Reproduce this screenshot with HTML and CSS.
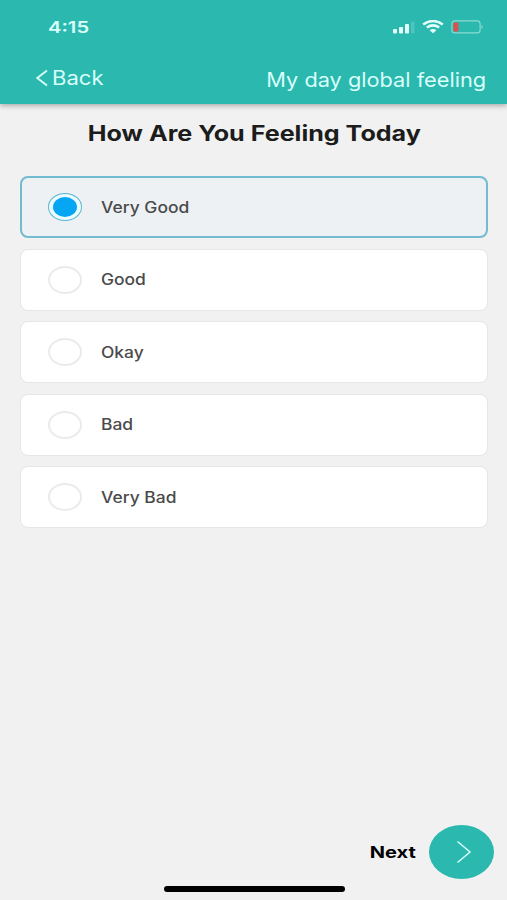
FILE: index.html
```html
<!DOCTYPE html>
<html lang="en">
<head>
  <meta charset="UTF-8">
  <meta name="viewport" content="width=device-width, initial-scale=1.0">
  <title>My day global feeling</title>
  <link rel="stylesheet" href="styles.css">
</head>
<body>
  <header class="header">
    <div class="status-bar">
      <span class="time">4:15</span>
      <div class="status-icons">
        <svg class="signal" width="22" height="14" viewBox="0 0 22 14">
          <rect x="0" y="9" width="4" height="4.5" rx="1"/>
          <rect x="6" y="7" width="4" height="6.5" rx="1"/>
          <rect x="12" y="4" width="4" height="9.5" rx="1"/>
          <rect x="18" y="1.5" width="3.5" height="12" rx="1" opacity="0.2"/>
        </svg>
        <svg class="wifi" width="22" height="14" viewBox="0 0 22 14">
          <path d="M1.2 4.6Q11-2.6 20.8 4.6"/>
          <path d="M4.8 7.6Q11 3.2 17.2 7.6"/>
          <path class="dot" d="M7.6 10.2Q11 7.6 14.4 10.2L11 13.2Z"/>
        </svg>
        <svg class="battery" width="33" height="14" viewBox="0 0 33 14">
          <rect class="case" x="0.9" y="0.9" width="28.2" height="12" rx="3"/>
          <rect class="level" x="2.4" y="2.4" width="5" height="9" rx="1.2"/>
          <path class="cap" d="M30.5 4.8Q33 6.9 30.5 9Z"/>
        </svg>
      </div>
    </div>
    <nav class="nav-bar">
      <a class="back">
        <svg width="12" height="18" viewBox="0 0 12 18"><path d="M11 1.5L1.3 9L11 16.5"/></svg>
        <span>Back</span>
      </a>
      <span class="page-title">My day global feeling</span>
    </nav>
  </header>

  <main class="content">
    <h1 class="question">How Are You Feeling Today</h1>
    <ul class="options">
      <li class="option selected"><span class="radio"></span><span class="label">Very Good</span></li>
      <li class="option"><span class="radio"></span><span class="label">Good</span></li>
      <li class="option"><span class="radio"></span><span class="label">Okay</span></li>
      <li class="option"><span class="radio"></span><span class="label">Bad</span></li>
      <li class="option"><span class="radio"></span><span class="label">Very Bad</span></li>
    </ul>
  </main>

  <footer class="footer">
    <span class="next-text">Next</span>
    <button class="next-button" aria-label="Next">
      <svg width="16" height="24" viewBox="0 0 16 24"><path d="M1.5 1.5L14 12L1.5 22.5"/></svg>
    </button>
  </footer>
  <div class="home-indicator"></div>
</body>
</html>
```
FILE: styles.css
```css
* {
  margin: 0;
  padding: 0;
  box-sizing: border-box;
}
body {
  display: flex;
  flex-direction: column;
  height: 900px;
  background: #f1f1f1;
  font-family: Inter, "Liberation Sans", sans-serif;
  overflow: hidden;
}
svg {
  display: block;
  fill: none;
}
.header {
  height: 104px;
  background: #2ab8af;
  color: #d9fffa;
  box-shadow: 0 2px 5px rgba(0, 0, 0, 0.28);
}
.status-bar {
  display: flex;
  justify-content: space-between;
  height: 54px;
  padding: 17px 23px 0 48px;
}
.time {
  font-size: 16px;
  font-weight: 600;
  line-height: 20px;
  transform: scaleX(1.26);
  transform-origin: left;
}
.status-icons {
  display: flex;
  gap: 7.5px;
  padding-top: 3px;
}
.signal {
  margin-right: -1px;
  fill: #e2fffb;
}
.wifi {
  stroke: #e2fffb;
  stroke-width: 2.5;
}
.wifi .dot {
  fill: #e2fffb;
  stroke: none;
}
.case {
  stroke: #8bdcd4;
  stroke-width: 1.1;
}
.level {
  fill: #d9534a;
}
.cap {
  fill: #8bdcd4;
}
.nav-bar {
  display: flex;
  justify-content: space-between;
  padding: 12px 21px 0 36px;
  line-height: 24px;
}
.back {
  display: flex;
  align-items: center;
  gap: 4px;
  height: 24px;
  font-size: 19.5px;
}
.back svg {
  stroke: #d9fffa;
  stroke-width: 1.8;
}
.back span {
  transform: scaleX(1.13);
  transform-origin: left;
}
.page-title {
  padding-top: 2px;
  font-size: 19.5px;
  transform: scaleX(1.115);
  transform-origin: right;
}
.content {
  flex: 1;
  padding: 17px 19px 0 20px;
}
.question {
  width: fit-content;
  margin: 0 auto;
  color: #1c1c1c;
  font-size: 21px;
  font-weight: 700;
  line-height: 26px;
  transform: scaleX(1.195);
}
.options {
  display: flex;
  flex-direction: column;
  gap: 10.5px;
  margin-top: 29px;
  list-style: none;
}
.option {
  display: flex;
  align-items: center;
  gap: 18.5px;
  height: 62px;
  padding-left: 27px;
  border: 1px solid #e6e6e6;
  border-radius: 8px;
  background: #fff;
}
.option.selected {
  border: 2px solid #72bbd0;
  padding-left: 26px;
  background: #edf1f4;
}
.radio {
  display: flex;
  align-items: center;
  justify-content: center;
  width: 34px;
  height: 28px;
  border: 2px solid #ebebeb;
  border-radius: 50%;
}
.selected .radio {
  border: 1.5px solid #5fb4d0;
  background: #e9fcff;
}
.selected .radio::after {
  content: "";
  width: 24px;
  height: 20px;
  border-radius: 50%;
  background: #06a6f4;
}
.label {
  color: #4a4a4a;
  font-size: 15.5px;
  font-weight: 500;
  transform: scaleX(1.125);
  transform-origin: left;
}
.footer {
  display: flex;
  align-items: center;
  justify-content: flex-end;
  gap: 13px;
  padding-right: 13px;
}
.next-text {
  color: #000;
  font-size: 16px;
  font-weight: 700;
  transform: scaleX(1.25);
  transform-origin: right;
}
.next-button {
  display: flex;
  align-items: center;
  justify-content: center;
  width: 65px;
  height: 54px;
  padding-left: 4px;
  border: none;
  border-radius: 50%;
  background: #2ab8af;
}
.next-button path {
  stroke: #d9fffa;
  stroke-width: 1.5;
}
.home-indicator {
  width: 181px;
  height: 6px;
  margin: 7px 0 8px 164px;
  border-radius: 3px;
  background: #000;
}
```
